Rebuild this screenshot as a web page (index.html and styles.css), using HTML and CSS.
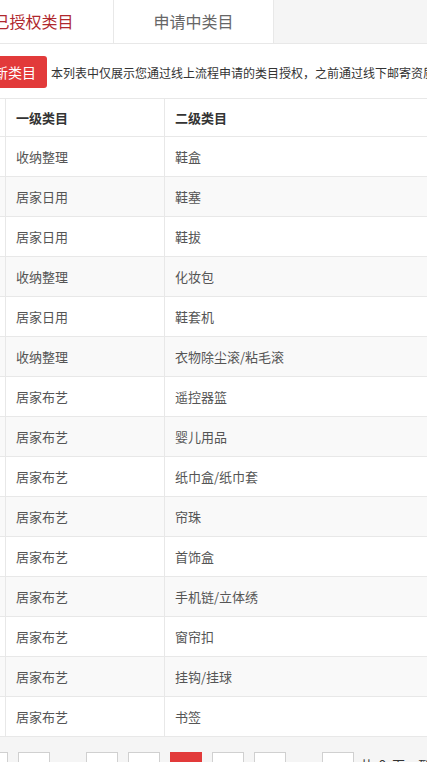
FILE: index.html
```html
<!DOCTYPE html>
<html lang="zh-CN">
	<head>
		<meta charset="UTF-8" />
		<meta name="viewport" content="width=device-width, initial-scale=1.0" />
		<title>类目管理</title>
		<link rel="stylesheet" href="styles.css">
	</head>
	<body>
		<div id="page">
			<div class="tabs">
				<div class="tab tab-active">已授权类目</div>
				<div class="tab">申请中类目</div>
			</div>
			<div class="toolbar">
				<button class="button">添加新类目</button>
				<span class="note">本列表中仅展示您通过线上流程申请的类目授权，之前通过线下邮寄资质申请的类目授权请联系运营人员查询</span>
			</div>
			<table class="list-table">
				<thead>
					<tr>
						<th class="col-index"></th>
						<th class="col-first">一级类目</th>
						<th>二级类目</th>
					</tr>
				</thead>
				<tbody>
					<tr><td class="col-index"></td><td>收纳整理</td><td>鞋盒</td></tr>
					<tr><td class="col-index"></td><td>居家日用</td><td>鞋塞</td></tr>
					<tr><td class="col-index"></td><td>居家日用</td><td>鞋拔</td></tr>
					<tr><td class="col-index"></td><td>收纳整理</td><td>化妆包</td></tr>
					<tr><td class="col-index"></td><td>居家日用</td><td>鞋套机</td></tr>
					<tr><td class="col-index"></td><td>收纳整理</td><td>衣物除尘滚/粘毛滚</td></tr>
					<tr><td class="col-index"></td><td>居家布艺</td><td>遥控器篮</td></tr>
					<tr><td class="col-index"></td><td>居家布艺</td><td>婴儿用品</td></tr>
					<tr><td class="col-index"></td><td>居家布艺</td><td>纸巾盒/纸巾套</td></tr>
					<tr><td class="col-index"></td><td>居家布艺</td><td>帘珠</td></tr>
					<tr><td class="col-index"></td><td>居家布艺</td><td>首饰盒</td></tr>
					<tr><td class="col-index"></td><td>居家布艺</td><td>手机链/立体绣</td></tr>
					<tr><td class="col-index"></td><td>居家布艺</td><td>窗帘扣</td></tr>
					<tr><td class="col-index"></td><td>居家布艺</td><td>挂钩/挂球</td></tr>
					<tr><td class="col-index"></td><td>居家布艺</td><td>书签</td></tr>
				</tbody>
			</table>
			<div class="pager">
				<a class="page-box">‹</a>
				<a class="page-box">1</a>
				<span class="page-dots">…</span>
				<a class="page-box">4</a>
				<a class="page-box">5</a>
				<a class="page-box page-current">6</a>
				<a class="page-box">7</a>
				<a class="page-box">8</a>
				<span class="page-dots">…</span>
				<a class="page-box">9</a>
				<span class="page-info">共 9 页，到第</span>
			</div>
		</div>
	</body>
</html>
```

FILE: styles.css
```css
:root {
	--main-text-color: #333;
	--cell-text-color: #555;
	--border-color: #e8e8e8;
	--gray-bg-color: #f5f5f5;
	--red-color: #e23a3a;
	--tab-red-color: #b0282e;
}
body {
	margin: 0;
	padding: 0;
	background-color: #fff;
	overflow: hidden;
	font-family: "Noto Sans CJK SC", "Liberation Sans", sans-serif;
	color: var(--main-text-color);
}
#page {
	width: 1000px;
	margin-left: -46px;
}
.tabs {
	display: flex;
	height: 43px;
	background-color: var(--gray-bg-color);
	border-bottom: 1px solid var(--border-color);
}
.tab {
	width: 159px;
	background-color: #fff;
	border-right: 1px solid var(--border-color);
	text-align: center;
	line-height: 43px;
	font-size: 16px;
	color: #666;
}
.tab-active {
	color: var(--tab-red-color);
}
.toolbar {
	display: flex;
	align-items: center;
	padding: 12px 0 10px 1px;
	white-space: nowrap;
}
.button {
	height: 32px;
	padding: 0 11px;
	border: none;
	border-radius: 3px;
	background-color: var(--red-color);
	color: #fff;
	font-family: inherit;
	font-size: 14px;
	cursor: pointer;
}
.note {
	margin-left: 4px;
	font-size: 12px;
	color: var(--main-text-color);
}
.list-table {
	width: 1000px;
	border-collapse: collapse;
	font-size: 13px;
}
.list-table th,
.list-table td {
	text-align: left;
	padding: 0 10px;
	border-bottom: 1px solid var(--border-color);
	border-left: 1px solid var(--border-color);
	white-space: nowrap;
}
.list-table th {
	height: 37px;
	border-top: 1px solid var(--border-color);
	font-weight: bold;
	color: var(--main-text-color);
}
.list-table td {
	height: 39px;
	color: var(--cell-text-color);
}
.list-table .col-index {
	width: 30px;
}
.list-table .col-first {
	width: 138px;
}
.list-table tbody tr:nth-child(even) {
	background-color: #f9f9f9;
}
.pager {
	display: flex;
	align-items: flex-start;
	gap: 10px;
	padding: 15px 0 20px 22px;
	background-color: var(--gray-bg-color);
	font-size: 12px;
}
.page-box {
	box-sizing: border-box;
	width: 32px;
	height: 32px;
	line-height: 30px;
	text-align: center;
	border: 1px solid #d0d0d0;
	background-color: #fff;
	color: var(--main-text-color);
}
.page-current {
	border-color: var(--red-color);
	background-color: var(--red-color);
	color: #fff;
}
.page-dots {
	width: 16px;
	line-height: 32px;
	text-align: center;
}
.page-info {
	margin-left: -4px;
	line-height: 26px;
	font-size: 13px;
	word-spacing: 3px;
}
```
